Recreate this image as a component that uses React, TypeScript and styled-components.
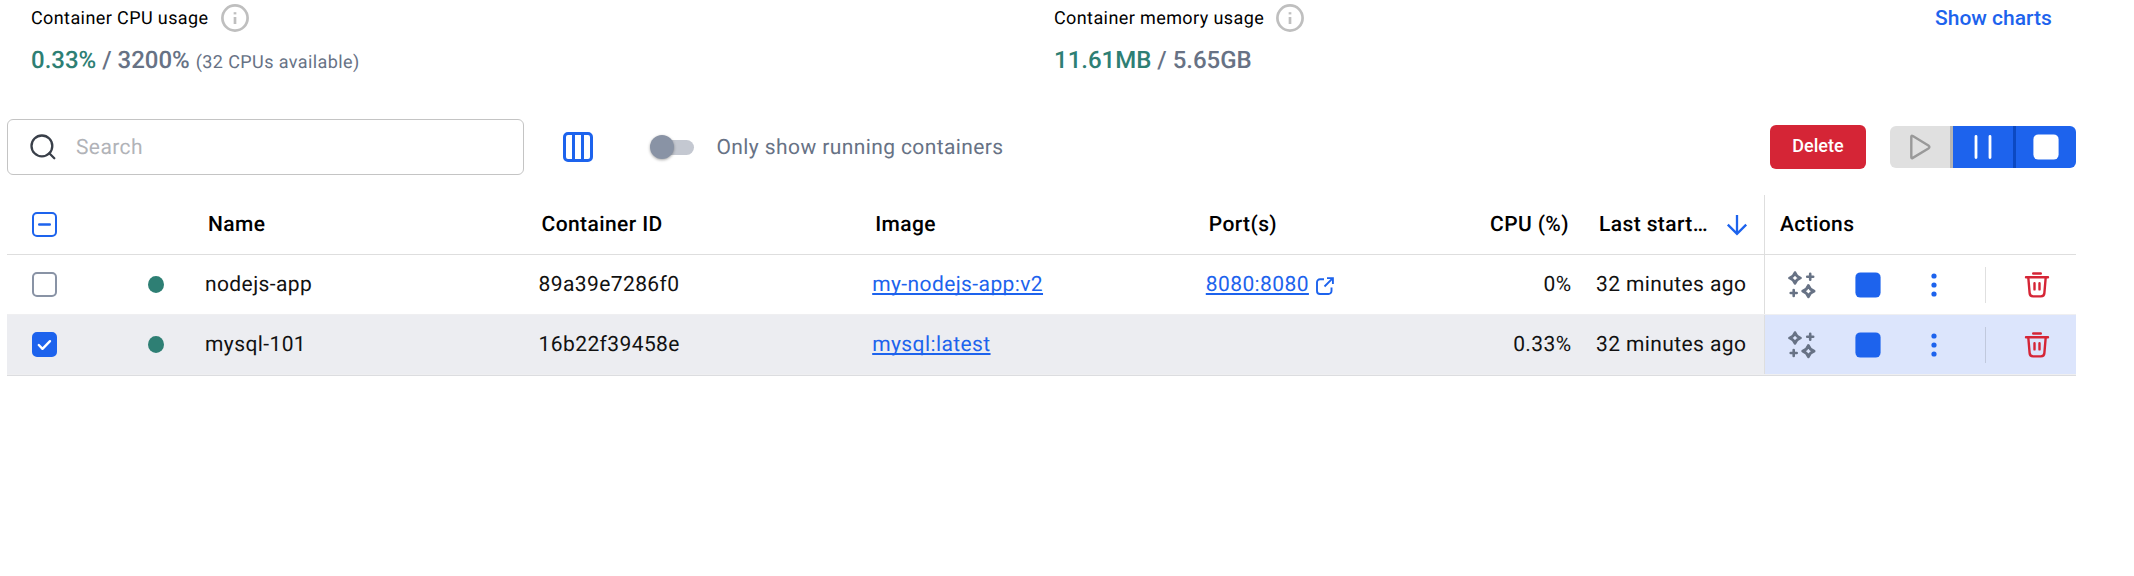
import React from 'react';
import styled, { createGlobalStyle } from 'styled-components';

const GlobalStyle = createGlobalStyle`
  * { box-sizing: border-box; }
  body {
    margin: 0;
    background: #fff;
    color: #000;
    font-family: Roboto, "Liberation Sans", sans-serif;
    font-size: 21px;
    letter-spacing: 0.4px;
    text-rendering: geometricPrecision;
  }
  svg { display: block; flex: none; }
`;

const Page = styled.main`
  width: 2134px;
  height: 576px;
  overflow: hidden;
  padding: 0 58px 0 7px;
`;

const StatsBar = styled.section`
  display: flex;
  height: 119px;
  padding-left: 24px;
`;

const Stat = styled.div`
  width: 1023px;
`;

const StatTitle = styled.div`
  display: flex;
  align-items: center;
  gap: 12px;
  height: 36px;
  font-size: 18px;
  line-height: 24px;
`;

const StatLabel = styled.span`
  padding-top: 2px;
`;

const StatValue = styled.div`
  display: flex;
  align-items: baseline;
  height: 48px;
  line-height: 48px;
  font-size: 24px;
  font-weight: 500;
  letter-spacing: 0;
  color: #677285;
  white-space: pre;
`;

const Current = styled.span`
  color: #2e7f74;
`;

const Note = styled.span`
  font-size: 18px;
  font-weight: 400;
  letter-spacing: 0.4px;
`;

const ChartsLink = styled.button`
  align-self: flex-start;
  margin-left: -142px;
  padding: 0;
  border: 0;
  background: none;
  font: 500 21px/36px Roboto, "Liberation Sans", sans-serif;
  letter-spacing: 0;
  color: #1d63ed;
  white-space: nowrap;
`;

const Toolbar = styled.section`
  display: flex;
  align-items: center;
  height: 56px;
`;

const SearchBox = styled.label`
  display: flex;
  align-items: center;
  gap: 20px;
  width: 517px;
  height: 56px;
  padding-left: 22px;
  border: 1px solid #c4c4c4;
  border-radius: 6px;
  color: #b1b3b8;
  line-height: 28px;
`;

const SearchText = styled.span`
  padding-top: 2px;
`;

const ColumnsButton = styled.span`
  margin-left: 39px;
`;

const Switch = styled.span`
  display: flex;
  align-items: center;
  width: 44px;
  height: 24px;
  margin-left: 57px;
  margin-right: 22.5px;
`;

const Thumb = styled.span`
  width: 24px;
  height: 24px;
  border-radius: 50%;
  background: #8993a5;
  box-shadow: 0 1px 3px rgba(0, 0, 0, 0.35);
  z-index: 1;
`;

const Track = styled.span`
  width: 37px;
  height: 15px;
  margin-left: -17px;
  border-radius: 8px;
  background: #c4c8d1;
`;

const SwitchLabel = styled.span`
  padding-top: 2px;
  color: #677285;
`;

const DeleteButton = styled.button`
  width: 96px;
  height: 44px;
  margin-right: 24px;
  padding: 0 0 3px;
  border: 0;
  border-radius: 6px;
  background: #d52536;
  color: #fff;
  font: 500 18px Roboto, "Liberation Sans", sans-serif;
`;

const ButtonGroup = styled.div`
  display: flex;
  height: 42px;
  border-radius: 6px;
  overflow: hidden;
`;

const ToolbarActions = styled.div`
  display: flex;
  align-items: center;
  margin-left: auto;
`;

const GroupButton = styled.span<{ $bg: string; $edge?: string }>`
  display: flex;
  align-items: center;
  justify-content: center;
  width: ${(p) => (p.$edge ? 63 : 60)}px;
  background: ${(p) => p.$bg};
  border-right: ${(p) => (p.$edge ? `3px solid ${p.$edge}` : '0')};
`;

const Table = styled.section`
  width: 2069px;
  margin-top: 20px;
  border-bottom: 1px solid #dcdde0;
`;

const Row = styled.div<{ $head?: boolean; $selected?: boolean }>`
  display: grid;
  grid-template-columns: 183px 333.6px 333.6px 333.6px 273px 125.2px 175px 312px;
  height: 60px;
  line-height: 61px;
  font-weight: ${(p) => (p.$head ? 500 : 400)};
  color: ${(p) => (p.$head ? '#000' : '#111')};
  background: ${(p) => (p.$selected ? '#ecedf1' : '#fff')};
  border-bottom: 1px solid ${(p) => (p.$head ? '#dedede' : '#efeff1')};
`;

const Cell = styled.div<{ $shift?: number }>`
  display: flex;
  align-items: center;
  height: 59px;
  padding-top: 2px;
  padding-left: ${(p) => 15 + (p.$shift ?? 0)}px;
  white-space: nowrap;
`;

const NumberCell = styled.div<{ $inset: number }>`
  height: 59px;
  text-align: right;
  padding-right: ${(p) => p.$inset}px;
`;

const SelectCell = styled.div`
  display: flex;
  align-items: center;
  height: 59px;
  padding-left: 25px;
`;

const StatusDot = styled.span`
  width: 16px;
  height: 17px;
  margin-left: 91px;
  border-radius: 50%;
  background: #2e7f74;
`;

const Checkbox = styled.span<{ $state: 'on' | 'off' | 'mixed' }>`
  display: flex;
  align-items: center;
  justify-content: center;
  width: 25px;
  height: 25px;
  border: 2px solid ${(p) => (p.$state === 'off' ? '#8993a5' : '#1d63ed')};
  border-radius: 5px;
  background: ${(p) => (p.$state === 'on' ? '#1d63ed' : '#fff')};
`;

const Link = styled.a`
  color: #1d63ed;
  text-decoration: underline;
  text-decoration-thickness: 2px;
  text-underline-offset: 2px;
  text-decoration-skip-ink: none;
`;

const PortIcon = styled.span`
  margin-left: 7.5px;
`;

const SortIcon = styled.span`
  margin: -2px 16px 0 auto;
`;

const ActionsHead = styled.div`
  height: 59px;
  padding-left: 15px;
  border-left: 1px solid #dedede;
`;

const ActionsCell = styled.div<{ $selected?: boolean }>`
  display: grid;
  grid-template-columns: 74px 58px 74px 27px 78px;
  align-items: center;
  justify-items: center;
  height: 59px;
  padding-top: 1px;
  border-left: 1px solid #dedede;
  background: ${(p) => (p.$selected ? '#dce5fc' : '#fff')};
`;

const Divider = styled.span`
  justify-self: start;
  width: 1px;
  height: 36px;
  margin-left: 14px;
  background: rgba(0, 0, 0, 0.12);
`;

const InfoIcon = () => (
  <svg width="28" height="28" viewBox="0 0 28 28" fill="none" stroke="#bfbfbf">
    <circle cx="14" cy="14" r="12.6" strokeWidth="2.7" />
    <path d="M14 13v7" strokeWidth="2.7" />
    <path d="M14 8.2v2.2" strokeWidth="2.7" />
  </svg>
);

const SearchIcon = () => (
  <svg width="26" height="26" viewBox="0 0 26 26" fill="none" stroke="#393f49" strokeWidth="2.3" strokeLinecap="round">
    <circle cx="11.9" cy="11.9" r="10.4" />
    <path d="M19.3 19.3l5 5" />
  </svg>
);

const ColumnsIcon = () => (
  <svg width="30" height="30" viewBox="0 0 30 30" fill="none" stroke="#1d63ed" strokeWidth="3">
    <rect x="1.5" y="1.5" width="27" height="27" rx="3.5" />
    <path d="M10.5 2v26M19.5 2v26" />
  </svg>
);

const PlayIcon = () => (
  <svg width="22" height="26" viewBox="0 0 22 26" fill="none" stroke="#999" strokeWidth="2.4" strokeLinejoin="round">
    <path d="M2.3 2.7v20.6q0 1.5 1.5.6l15.6-9.5q2-1.4 0-2.8L3.8 2.1q-1.5-.9-1.5.6z" />
  </svg>
);

const PauseIcon = () => (
  <svg width="20" height="24" viewBox="0 0 20 24" stroke="#fff" strokeWidth="2.8" strokeLinecap="round">
    <path d="M3 1.5v21M17 1.5v21" />
  </svg>
);

const StopIcon = ({ color }: { color: string }) => (
  <svg width="26" height="26" viewBox="0 0 26 26">
    <rect x="0.4" y="0.4" width="25.2" height="25.2" rx="5" fill={color} />
  </svg>
);

const SortDownIcon = () => (
  <svg width="22" height="22" viewBox="0 0 22 22" fill="none" stroke="#1d63ed" strokeWidth="2.3">
    <path d="M11 1v18.5M1.8 10.6l9.2 9.2 9.2-9.2" />
  </svg>
);

const ExternalIcon = () => (
  <svg width="18" height="18" viewBox="0 0 18 18" fill="none" stroke="#1d63ed" strokeWidth="1.9">
    <path d="M8 2.2H4A3 3 0 0 0 1 5.2V14a3 3 0 0 0 3 3h8.5a3 3 0 0 0 3-3v-3.5" />
    <path d="M8.5 9.5L16.8 1.2M11 1.1h5.9V7" />
  </svg>
);

const SparklesIcon = () => (
  <svg width="28" height="28" viewBox="0 0 28 28" fill="none" stroke="#677285" strokeWidth="2.8" strokeLinejoin="round" strokeLinecap="round">
    <path d="M7 1.6Q8.3 5.7 12.4 7Q8.3 8.3 7 12.4Q5.7 8.3 1.6 7Q5.7 5.7 7 1.6z" />
    <path d="M20.4 14.5Q21.8 18.8 26.1 20.2Q21.8 21.6 20.4 25.9Q19 21.6 14.7 20.2Q19 18.8 20.4 14.5z" />
    <path d="M22.2 2.8v6M19.2 5.8h6M5.7 19v6M2.7 22h6" strokeWidth="2.6" />
  </svg>
);

const MoreIcon = () => (
  <svg width="6" height="24" viewBox="0 0 6 24" fill="#1d63ed">
    <circle cx="3" cy="3" r="2.6" />
    <circle cx="3" cy="12" r="2.6" />
    <circle cx="3" cy="21" r="2.6" />
  </svg>
);

const TrashIcon = () => (
  <svg width="26" height="26" viewBox="0 0 26 26" fill="none" stroke="#d52536" strokeWidth="2.4" strokeLinecap="round">
    <path d="M9.2 1.5h7.6M2 5.2h22" />
    <path d="M4.3 5.5l1.3 15.4a3.7 3.7 0 0 0 3.6 3.5h7.6a3.7 3.7 0 0 0 3.6-3.5l1.3-15.4" />
    <path d="M10.5 11.2v6.2M15.5 11.2v6.2" />
  </svg>
);

const CheckIcon = () => (
  <svg width="15" height="12" viewBox="0 0 15 12" fill="none" stroke="#fff" strokeWidth="2.4" strokeLinecap="round" strokeLinejoin="round">
    <path d="M1.8 6l3.7 3.8L13 2.2" />
  </svg>
);

const MixedIcon = () => (
  <svg width="13" height="3" viewBox="0 0 13 3">
    <rect width="13" height="2.6" y="0.2" rx="1.2" fill="#1d63ed" />
  </svg>
);

type Container = {
  name: string;
  id: string;
  image: string;
  port?: string;
  cpu: string;
  started: string;
  selected?: boolean;
};

const containers: Container[] = [
  { name: 'nodejs-app', id: '89a39e7286f0', image: 'my-nodejs-app:v2', port: '8080:8080', cpu: '0%', started: '32 minutes ago' },
  { name: 'mysql-101', id: '16b22f39458e', image: 'mysql:latest', cpu: '0.33%', started: '32 minutes ago', selected: true },
];

const ContainerRow = ({ item }: { item: Container }) => (
  <Row $selected={item.selected}>
    <SelectCell>
      <Checkbox $state={item.selected ? 'on' : 'off'}>{item.selected && <CheckIcon />}</Checkbox>
      <StatusDot />
    </SelectCell>
    <Cell>{item.name}</Cell>
    <Cell>{item.id}</Cell>
    <Cell><Link>{item.image}</Link></Cell>
    <Cell>
      {item.port && (
        <>
          <Link>{item.port}</Link>
          <PortIcon><ExternalIcon /></PortIcon>
        </>
      )}
    </Cell>
    <NumberCell $inset={17.5}>{item.cpu}</NumberCell>
    <Cell $shift={-8}>{item.started}</Cell>
    <ActionsCell $selected={item.selected}>
      <SparklesIcon />
      <StopIcon color="#1d63ed" />
      <MoreIcon />
      <Divider />
      <TrashIcon />
    </ActionsCell>
  </Row>
);

export default function App() {
  return (
    <>
      <GlobalStyle />
      <Page>
        <StatsBar>
          <Stat>
            <StatTitle><StatLabel>Container CPU usage</StatLabel><InfoIcon /></StatTitle>
            <StatValue><Current>0.33%</Current> / 3200% <Note>(32 CPUs available)</Note></StatValue>
          </Stat>
          <Stat>
            <StatTitle><StatLabel>Container memory usage</StatLabel><InfoIcon /></StatTitle>
            <StatValue><Current>11.61MB</Current> / 5.65GB</StatValue>
          </Stat>
          <ChartsLink>Show charts</ChartsLink>
        </StatsBar>
        <Toolbar>
          <SearchBox><SearchIcon /><SearchText>Search</SearchText></SearchBox>
          <ColumnsButton><ColumnsIcon /></ColumnsButton>
          <Switch><Thumb /><Track /></Switch>
          <SwitchLabel>Only show running containers</SwitchLabel>
          <ToolbarActions>
            <DeleteButton>Delete</DeleteButton>
            <ButtonGroup>
              <GroupButton $bg="#e0e0e0" $edge="#b5b5b5"><PlayIcon /></GroupButton>
              <GroupButton $bg="#1d63ed" $edge="#0c49c2"><PauseIcon /></GroupButton>
              <GroupButton $bg="#1d63ed"><StopIcon color="#fff" /></GroupButton>
            </ButtonGroup>
          </ToolbarActions>
        </Toolbar>
        <Table>
          <Row $head>
            <SelectCell><Checkbox $state="mixed"><MixedIcon /></Checkbox></SelectCell>
            <Cell $shift={3}>Name</Cell>
            <Cell $shift={3}>Container ID</Cell>
            <Cell $shift={3}>Image</Cell>
            <Cell $shift={3}>Port(s)</Cell>
            <NumberCell $inset={20}>CPU (%)</NumberCell>
            <Cell $shift={-5}>Last start…<SortIcon><SortDownIcon /></SortIcon></Cell>
            <ActionsHead>Actions</ActionsHead>
          </Row>
          {containers.map((item) => <ContainerRow key={item.id} item={item} />)}
        </Table>
      </Page>
    </>
  );
}
